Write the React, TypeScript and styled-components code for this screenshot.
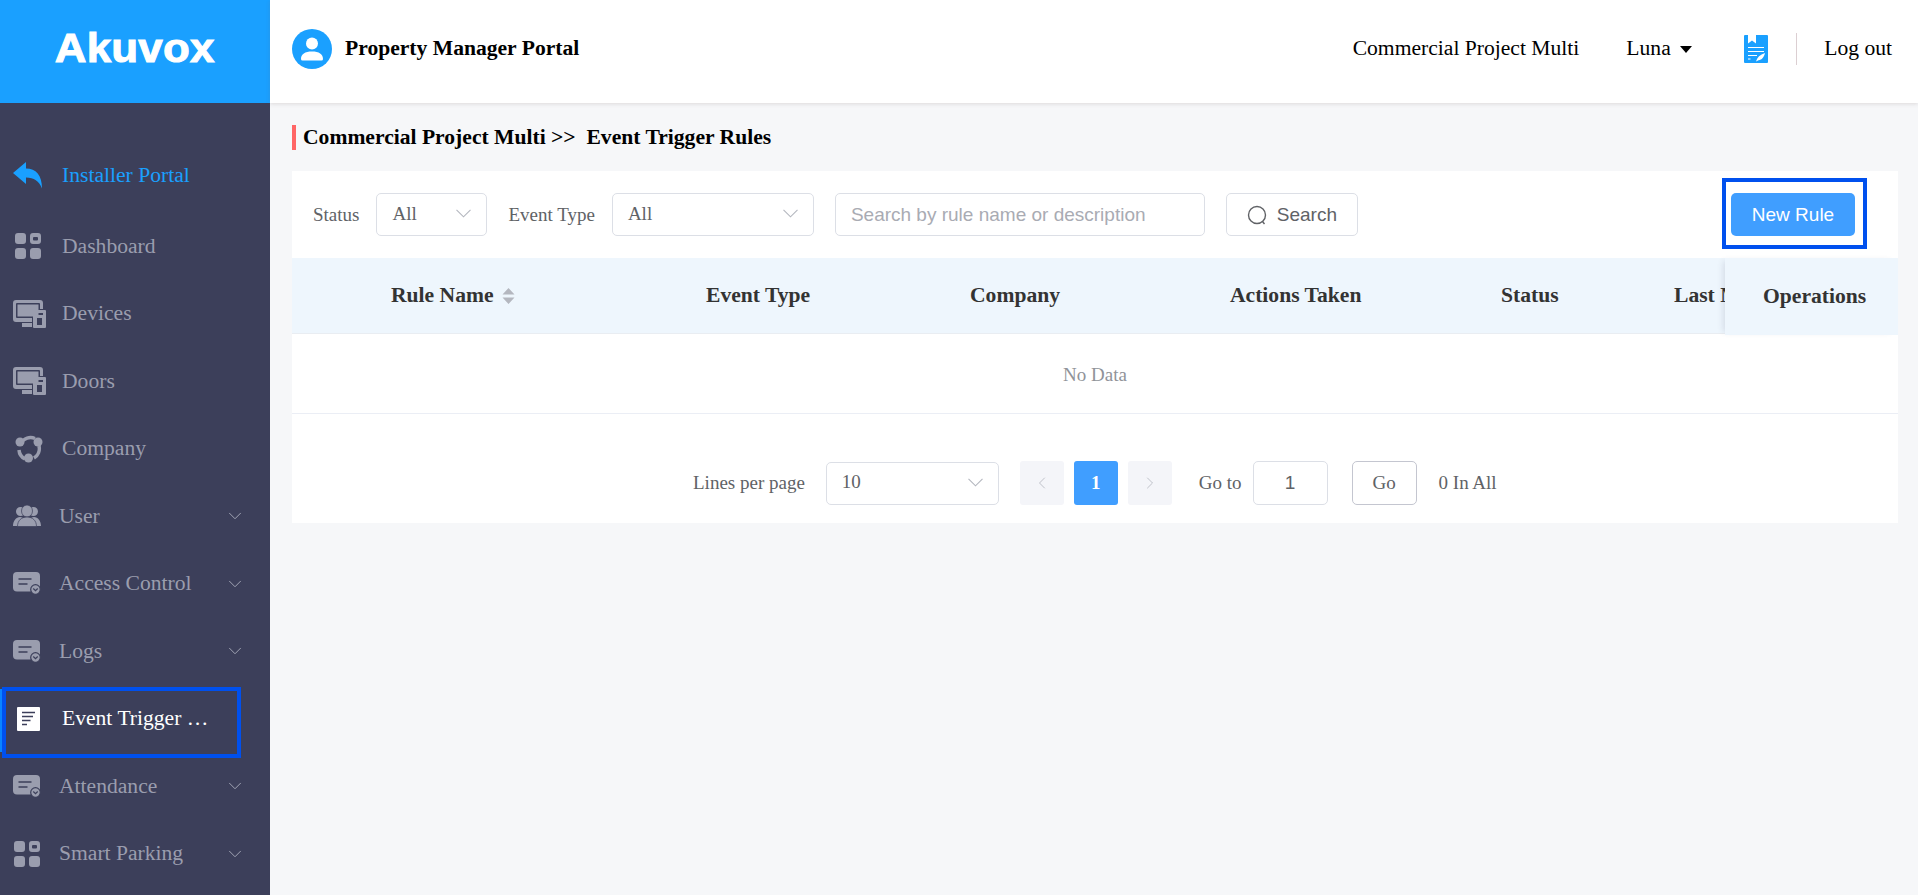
import styled, { createGlobalStyle } from "styled-components";
import { ReactNode } from "react";
import { ChevronDown, ChevronLeft, ChevronRight } from "lucide-react";

const GlobalStyle = createGlobalStyle`
    html, body {
        margin: 0;
        padding: 0;
        height: 100%;
        overflow: hidden;
        background: #f6f7f9;
        font-family: "Liberation Serif", "Times New Roman", serif;
    }
    *, *::before, *::after { box-sizing: border-box; }
`

const Page = styled.div`
    display: flex;
    width: 1918px;
    height: 895px;
    overflow: hidden;
`

const Sidebar = styled.aside`
    width: 270px;
    flex: none;
    background: #3c3f5a;
    display: flex;
    flex-direction: column;
`

const LogoBar = styled.div`
    height: 103px;
    flex: none;
    background: #1aa0ff;
    color: #fff;
    display: flex;
    align-items: center;
    justify-content: center;
    padding-bottom: 7px;
`

const LogoText = styled.span`
    display: inline-block;
    font-family: "Liberation Sans", Arial, sans-serif;
    font-weight: 700;
    font-size: 41px;
    letter-spacing: 0.2px;
    -webkit-text-stroke: 1px #fff;
    transform: scaleX(1.07);
`

const Nav = styled.nav`
    padding-top: 39px;
    display: flex;
    flex-direction: column;
`

const NavRow = styled.div<{ $active?: boolean; $portal?: boolean; $sub?: boolean }>`
    position: relative;
    height: 67.5px;
    flex: none;
    display: flex;
    align-items: center;
    padding-left: 13px;
    margin-bottom: ${props => props.$portal ? "3px" : "0"};
    font-size: 21.6px;
    color: ${props => props.$active ? "#fff" : props.$portal ? "#1aa0ff" : "#9a9dae"};

    .label {
        margin-left: ${props => props.$sub ? "18px" : "21px"};
        white-space: nowrap;
    }
    .chev {
        position: absolute;
        left: 224px;
        top: 50%;
        transform: translateY(-50%);
        color: #a9acbb;
    }
    ${props => props.$active ? `
        &::before {
            content: "";
            position: absolute;
            left: 0;
            top: 4px;
            bottom: 1px;
            width: 2px;
            background: #0a84ff;
        }
        &::after {
            content: "";
            position: absolute;
            left: 2px;
            top: 2px;
            width: 239px;
            height: 71px;
            border: 4.5px solid #0050ee;
        }
    ` : ""}
`

const IconBox = styled.span<{ $inset?: number }>`
    width: 28px;
    height: 30px;
    flex: none;
    display: flex;
    align-items: center;
    justify-content: flex-start;
    padding-left: ${props => props.$inset ?? 0}px;
    overflow: visible;
    svg { flex: none; }
`

const Main = styled.main`
    flex: 1;
    min-width: 0;
    display: flex;
    flex-direction: column;
`

const TopBar = styled.header`
    height: 103px;
    flex: none;
    background: #fff;
    box-shadow: 0 1px 4px rgba(120, 100, 100, 0.2);
    display: flex;
    align-items: center;
    padding: 0 26px 5px 22px;
    color: #000;
    font-size: 21.6px;
`

const PortalName = styled.div`
    margin-left: 13px;
    padding-bottom: 2px;
    font-weight: 700;
    flex: 1;
`

const TopItem = styled.div<{ $gap?: number }>`
    display: flex;
    align-items: center;
    padding-bottom: 2px;
    margin-left: ${props => props.$gap ?? 0}px;
`

const NoteSlot = styled.div`
    display: flex;
    margin-left: 52px;
`

const Caret = styled.span`
    width: 0;
    height: 0;
    margin-left: 9.5px;
    margin-top: 2px;
    border-left: 6.5px solid transparent;
    border-right: 6.5px solid transparent;
    border-top: 7px solid #000;
`

const VLine = styled.span`
    width: 1px;
    height: 32px;
    background: #dccfd2;
    margin-left: 28px;
    margin-right: 27px;
`

const Content = styled.div`
    padding: 22px 20px 0 22px;
    display: flex;
    flex-direction: column;
`

const Crumb = styled.h1`
    margin: 0 0 21px;
    height: 25px;
    line-height: 25px;
    border-left: 4px solid #ff6666;
    padding-left: 7px;
    font-size: 21.6px;
    font-weight: 700;
    color: #000;
    white-space: pre;
`

const Panel = styled.section`
    background: #fff;
    display: flex;
    flex-direction: column;
`

const FilterRow = styled.div`
    height: 87px;
    display: flex;
    align-items: center;
    padding-left: 21px;
    font-size: 19px;
    color: #606266;
`

const FilterLabel = styled.span<{ $left?: number }>`
    margin-left: ${props => props.$left ?? 0}px;
    margin-right: 17px;
    white-space: nowrap;
`

const SelectBox = styled.div<{ $width: number }>`
    width: ${props => props.$width}px;
    height: 43px;
    flex: none;
    border: 1.5px solid #dcdfe6;
    border-radius: 5px;
    background: #fff;
    display: flex;
    align-items: center;
    justify-content: space-between;
    padding: 0 15px 2px 15px;
    font-size: 19px;
    color: #606266;
`

const SearchInput = styled.div`
    width: 370px;
    height: 43px;
    flex: none;
    margin-left: 21px;
    border: 1.5px solid #dcdfe6;
    border-radius: 5px;
    display: flex;
    align-items: center;
    padding-left: 15px;
    font-family: "Liberation Sans", Arial, sans-serif;
    font-size: 19px;
    color: #a9abb3;
`

const SearchButton = styled.button`
    width: 132px;
    height: 43px;
    flex: none;
    margin-left: 21px;
    border: 1.5px solid #dcdfe6;
    border-radius: 5px;
    background: #fff;
    display: flex;
    align-items: center;
    justify-content: center;
    gap: 10px;
    font-family: "Liberation Sans", Arial, sans-serif;
    font-size: 19px;
    color: #606266;
    padding: 0;
`

const NewRuleWrap = styled.div`
    position: relative;
    margin-left: auto;
    margin-right: 43px;
    &::after {
        content: "";
        position: absolute;
        left: -9px;
        right: -12px;
        top: -15px;
        bottom: -13px;
        border: 4.5px solid #0050ee;
        pointer-events: none;
    }
`

const NewRuleButton = styled.button`
    display: block;
    width: 124px;
    height: 43px;
    border: 0;
    border-radius: 5px;
    background: #409eff;
    color: #fff;
    font-family: "Liberation Sans", Arial, sans-serif;
    font-size: 19px;
    padding: 0;
`

const TableHead = styled.div`
    position: relative;
    height: 76px;
    background: #eef6fd;
    border-bottom: 1px solid #e9edf2;
    display: flex;
`

const HeadScroll = styled.div`
    flex: 1;
    min-width: 0;
    overflow: hidden;
    position: relative;
    height: 75px;
`

const HeadCell = styled.div<{ $pad: number }>`
    position: absolute;
    top: 0;
    left: ${props => props.$pad}px;
    height: 75px;
    display: flex;
    align-items: center;
    font-size: 21.6px;
    font-weight: 700;
    color: #333;
    white-space: nowrap;
`

const FixedCell = styled.div`
    width: 173px;
    flex: none;
    height: 77px;
    background: #eef6fd;
    box-shadow: -5px 0 6px -3px rgba(40, 50, 80, 0.12);
    display: flex;
    align-items: center;
    padding-left: 38px;
    font-size: 21.6px;
    font-weight: 700;
    color: #333;
    z-index: 1;
`

const SortMark = styled.svg`
    margin-left: 8px;
    flex: none;
`

const EmptyRow = styled.div`
    height: 80px;
    border-bottom: 1px solid #ebeef5;
    display: flex;
    align-items: center;
    justify-content: center;
    padding-top: 2px;
    font-size: 19px;
    color: #909399;
`

const Pager = styled.div`
    height: 109px;
    display: flex;
    align-items: center;
    padding: 29px 0 0 401px;
    font-size: 19px;
    color: #606266;
`

const PagerText = styled.span<{ $left?: number; $right?: number }>`
    margin-left: ${props => props.$left ?? 0}px;
    margin-right: ${props => props.$right ?? 0}px;
    white-space: nowrap;
`

const PageBtn = styled.div<{ $on?: boolean; $first?: boolean }>`
    width: 44px;
    height: 44px;
    flex: none;
    margin-left: ${props => props.$first ? "21px" : "0"};
    margin-right: 10px;
    border-radius: 3px;
    background: ${props => props.$on ? "#409eff" : "#f4f5f9"};
    color: ${props => props.$on ? "#fff" : "#b4b7bf"};
    font-weight: 700;
    display: flex;
    align-items: center;
    justify-content: center;
`

const GoInput = styled.div`
    width: 75px;
    height: 44px;
    flex: none;
    border: 1.5px solid #dcdfe6;
    border-radius: 5px;
    display: flex;
    align-items: center;
    justify-content: center;
    font-family: "Liberation Sans", Arial, sans-serif;
    font-size: 19px;
`

const GoButton = styled.div`
    width: 65px;
    height: 44px;
    flex: none;
    margin-left: 24px;
    border: 1.5px solid #c4c6d0;
    border-radius: 5px;
    display: flex;
    align-items: center;
    justify-content: center;
`

const SelectChevron = () => (
    <svg width="15" height="9" viewBox="0 0 15 9" fill="none" stroke="#b4b7bf" strokeWidth="1.100">
        <path d="M.5.8l7 7 7-7" />
    </svg>
);

const DashIcon = () => (
    <svg width="28" height="28" viewBox="0 0 28 28" fill="#9a9dae">
        <rect x="1" y="1" width="11" height="11" rx="3" />
        <path fillRule="evenodd" d="M20 1h4a3 3 0 0 1 3 3v5a3 3 0 0 1-3 3h-5a3 3 0 0 1-3-3V4a3 3 0 0 1 3-3zm0 4a1 1 0 0 0-1 1v1.500a1 1 0 0 0 1 1h3a1 1 0 0 0 1-1V6a1 1 0 0 0-1-1z" />
        <rect x="1" y="16" width="11" height="11" rx="3" />
        <rect x="16" y="16" width="11" height="11" rx="3" />
    </svg>
);

const DeviceIcon = () => (
    <svg width="33" height="28" viewBox="0 0 33 28" fill="#9a9dae">
        <path fillRule="evenodd" d="M3 0h24a3 3 0 0 1 3 3v6h-3V4a1 1 0 0 0-1-1H4a1 1 0 0 0-1 1v13a1 1 0 0 0 1 1h15v4H3a3 3 0 0 1-3-3V3a3 3 0 0 1 3-3z" />
        <rect x="4.500" y="4.500" width="21" height="12" />
        <rect x="9" y="23" width="10" height="4" />
        <path fillRule="evenodd" d="M21 10h11a1 1 0 0 1 1 1v16a1 1 0 0 1-1 1H21a1 1 0 0 1-1-1V11a1 1 0 0 1 1-1zm2 3v2h7v-2zm1 5v7h5v-7z" />
    </svg>
);

const CompanyIcon = () => (
    <svg width="28" height="28" viewBox="0 0 28 28" fill="none">
        <path d="M6 8a11 11 0 0 1 14-4.500M24 11a11 11 0 0 1-5 12M10 24a11 11 0 0 1-6-9" stroke="#9a9dae" strokeWidth="3.500" />
        <circle cx="5" cy="7" r="4.500" fill="#9a9dae" />
        <circle cx="23" cy="7" r="4.500" fill="#9a9dae" />
        <circle cx="13.500" cy="23" r="4.500" fill="#9a9dae" />
    </svg>
);

const UserIcon = () => (
    <svg width="28" height="22" viewBox="0 0 28 22" fill="#9a9dae">
        <circle cx="7.500" cy="6.500" r="4.500" />
        <circle cx="20.500" cy="6.500" r="4.500" />
        <path d="M0 21c0-5 3-9 7-9s7 4 7 9zM14 21c0-5 3-9 7-9s7 4 7 9z" />
        <ellipse cx="14" cy="6" rx="5.500" ry="6" stroke="#3c3f5a" strokeWidth=".7" />
        <path d="M4.500 21.500c0-6 4-9.500 9.500-9.500s9.500 3.500 9.500 9.500z" stroke="#3c3f5a" strokeWidth=".7" />
    </svg>
);

const CardIcon = () => (
    <svg width="28" height="23" viewBox="0 0 28 23">
        <rect x="0" y="0" width="27" height="19.500" rx="4" fill="#9a9dae" />
        <path d="M5.500 7h13M5.500 12h9" stroke="#3c3f5a" strokeWidth="1.400" />
        <circle cx="22.500" cy="17.500" r="4.800" fill="#9a9dae" stroke="#3c3f5a" strokeWidth="1.200" />
        <path d="M20.300 16.500l2.200 2.200 2.200-2.200" fill="none" stroke="#3c3f5a" strokeWidth="1.200" />
    </svg>
);

const DocIcon = () => (
    <svg width="23" height="24" viewBox="0 0 23 24">
        <rect x="0" y="0" width="23" height="24" rx="1" fill="#fff" />
        <path d="M5 5.500h13M5 9.500h11M5 13.500h8.500M5 17.500h5" stroke="#3c3f5a" strokeWidth="1.500" />
    </svg>
);

const ReplyIcon = () => (
    <svg width="30" height="27" viewBox="0 0 30 27" fill="#1aa0ff">
        <path d="M13 0v6.500C23 6.500 29 13 29 26.500 26 19 21 15.500 13 15.500V22L0 11z" />
    </svg>
);

const AvatarIcon = () => (
    <svg width="40" height="40" viewBox="0 0 40 40">
        <circle cx="20" cy="20" r="20" fill="#1aa0ff" />
        <circle cx="20" cy="14.500" r="6" fill="#fff" />
        <path d="M9 30c0-5 4-7.500 11-7.500S31 25 31 30a1.500 1.500 0 0 1-1.500 1.500h-19A1.500 1.500 0 0 1 9 30z" fill="#fff" />
    </svg>
);

const NoteIcon = () => (
    <svg width="24" height="28" viewBox="0 0 24 28">
        <rect width="24" height="28" rx="1" fill="#1aa0ff" />
        <path d="M4 0h8v8.500l-4-3-4 3z" fill="#fff" />
        <path d="M4 12.500h16M4 16.500h16M4 20.500h9M4 24h2.500" stroke="#fff" strokeWidth="1.100" />
        <path d="M12 26.500c1-4 4-7 9-8.500-1 4-3 7-6.500 7.200z" fill="#fff" />
    </svg>
);

const SearchIcon = () => (
    <svg width="20" height="20" viewBox="0 0 20 20" fill="none" stroke="#606266" strokeWidth="1.400">
        <circle cx="10" cy="10" r="8.500" />
        <path d="M15.500 16.500l2 2.500" />
    </svg>
);

const menu: { label: string; icon: ReactNode; inset?: number; sub?: boolean; active?: boolean }[] = [
    { label: "Dashboard", icon: <DashIcon />, inset: 1 },
    { label: "Devices", icon: <DeviceIcon /> },
    { label: "Doors", icon: <DeviceIcon /> },
    { label: "Company", icon: <CompanyIcon />, inset: 2 },
    { label: "User", icon: <UserIcon />, sub: true },
    { label: "Access Control", icon: <CardIcon />, sub: true },
    { label: "Logs", icon: <CardIcon />, sub: true },
    { label: "Event Trigger …", icon: <DocIcon />, inset: 4, active: true },
    { label: "Attendance", icon: <CardIcon />, sub: true },
    { label: "Smart Parking", icon: <DashIcon />, sub: true },
];

const headCols = [
    { label: "Rule Name", left: 99, sort: true },
    { label: "Event Type", left: 414 },
    { label: "Company", left: 678 },
    { label: "Actions Taken", left: 938 },
    { label: "Status", left: 1209 },
    { label: "Last Modified", left: 1382 },
];

export default function App() {
    return (
        <Page>
            <GlobalStyle />
            <Sidebar>
                <LogoBar><LogoText>Akuvox</LogoText></LogoBar>
                <Nav>
                    <NavRow $portal>
                        <IconBox><ReplyIcon /></IconBox>
                        <span className="label">Installer Portal</span>
                    </NavRow>
                    {menu.map(item => (
                        <NavRow key={item.label} $sub={item.sub} $active={item.active}>
                            <IconBox $inset={item.inset}>{item.icon}</IconBox>
                            <span className="label">{item.label}</span>
                            {item.sub && <ChevronDown className="chev" size={22} strokeWidth={1} />}
                        </NavRow>
                    ))}
                </Nav>
            </Sidebar>
            <Main>
                <TopBar>
                    <AvatarIcon />
                    <PortalName>Property Manager Portal</PortalName>
                    <TopItem>Commercial Project Multi</TopItem>
                    <TopItem $gap={47}>Luna<Caret /></TopItem>
                    <NoteSlot><NoteIcon /></NoteSlot>
                    <VLine />
                    <TopItem>Log out</TopItem>
                </TopBar>
                <Content>
                    <Crumb>{"Commercial Project Multi >>  Event Trigger Rules"}</Crumb>
                    <Panel>
                        <FilterRow>
                            <FilterLabel>Status</FilterLabel>
                            <SelectBox $width={111}>All<SelectChevron /></SelectBox>
                            <FilterLabel $left={21}>Event Type</FilterLabel>
                            <SelectBox $width={202}>All<SelectChevron /></SelectBox>
                            <SearchInput>Search by rule name or description</SearchInput>
                            <SearchButton><SearchIcon />Search</SearchButton>
                            <NewRuleWrap><NewRuleButton>New Rule</NewRuleButton></NewRuleWrap>
                        </FilterRow>
                        <TableHead>
                            <HeadScroll>
                                {headCols.map(col => (
                                    <HeadCell key={col.label} $pad={col.left}>
                                        {col.label}
                                        {col.sort && (
                                            <SortMark width="13" height="18" viewBox="0 0 13 18" fill="#b4b7bf">
                                                <path d="M6.500 1L12.500 7.500H.5zM6.500 17L.5 10.500h12z" />
                                            </SortMark>
                                        )}
                                    </HeadCell>
                                ))}
                            </HeadScroll>
                            <FixedCell>Operations</FixedCell>
                        </TableHead>
                        <EmptyRow>No Data</EmptyRow>
                        <Pager>
                            <PagerText $right={21}>Lines per page</PagerText>
                            <SelectBox $width={173}>10<SelectChevron /></SelectBox>
                            <PageBtn $first><ChevronLeft size={20} strokeWidth={1} /></PageBtn>
                            <PageBtn $on>1</PageBtn>
                            <PageBtn><ChevronRight size={20} strokeWidth={1} /></PageBtn>
                            <PagerText $left={17} $right={11}>Go to</PagerText>
                            <GoInput>1</GoInput>
                            <GoButton>Go</GoButton>
                            <PagerText $left={22}>0 In All</PagerText>
                        </Pager>
                    </Panel>
                </Content>
            </Main>
        </Page>
    );
}
